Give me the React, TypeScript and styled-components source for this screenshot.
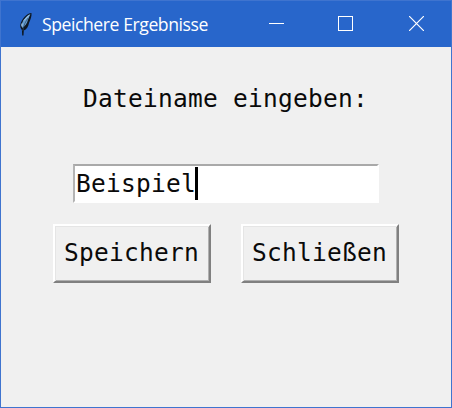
import React from 'react';
import styled, { createGlobalStyle } from 'styled-components';

const GlobalStyle = createGlobalStyle`
  *, *::before, *::after { box-sizing: border-box; }
  body { margin: 0; background: #f0f0f0; }
`;

const Window = styled.main`
  width: 452px;
  height: 408px;
  display: flex;
  flex-direction: column;
  border: 1px solid #3f74cf;
  background: #f0f0f0;
  overflow: hidden;
`;

const TitleBar = styled.header`
  flex: none;
  height: 46px;
  display: flex;
  align-items: center;
  padding-left: 17px;
  background: #2866cb;
  color: #fff;
`;

const Title = styled.h1`
  flex: 1;
  margin: 0 0 0 8px;
  font: 400 17.6px/24px 'Open Sans', sans-serif;
  letter-spacing: -0.43px;
  white-space: nowrap;
`;

const Controls = styled.div`
  display: flex;
  height: 100%;
`;

const ControlButton = styled.button<{ $width: number }>`
  width: ${({ $width }) => $width}px;
  height: 100%;
  padding: 0 0 1px;
  border: 0;
  background: none;
  color: #fff;
  display: grid;
  place-items: center;
`;

const Content = styled.form`
  flex: 1;
  display: flex;
  flex-direction: column;
  align-items: flex-start;
  font: 24.5px/32px 'DejaVu Sans Mono', monospace;
  letter-spacing: 0.25px;
  color: #0a0a0a;
`;

const Prompt = styled.label`
  margin: 36px 0 0 82px;
  white-space: pre;
`;

const Entry = styled.div`
  width: 306px;
  height: 39px;
  margin: 49px 0 0 72px;
  display: flex;
  align-items: center;
  padding-left: 1px;
  background: #fff;
  border: 2px solid;
  border-color: #a9a9a9 #fff #fff #b4b4b4;
  box-shadow: inset 0 1px 0 #fff;
`;

const Caret = styled.span`
  width: 3px;
  height: 33px;
  margin-left: -1px;
  background: #000;
`;

const Actions = styled.div`
  display: flex;
  gap: 30px;
  margin: 21px 0 0 52px;
`;

const ActionButton = styled.button`
  width: 158px;
  height: 59px;
  padding: 0 1px 1px 0;
  font: inherit;
  letter-spacing: inherit;
  color: inherit;
  background: #f0f0f0;
  border: 2px solid;
  border-color: #fff #808080 #808080 #fff;
  box-shadow: inset 1px 1px 0 #e5e5e5, inset -1px -1px 0 #b0b0b0;
`;

const Feather = () => (
  <svg width="16" height="24" viewBox="0 0 16 24" fill="none">
    <path d="M13.500 1C9 1 3.500 7 2.400 12.500c-.4 2 .2 4 1.500 5.500l.3 5.500h1.300l.3-5c2.700-1 4.700-4 5.200-7.500C12.400 8 13.900 4 13.500 1Z" fill="#0d1722" />
    <path d="M12.400 2C8.300 4 4.600 8 3.600 13l.7 3c2.400-1.500 5-4.500 5.600-8L12.400 2Z" fill="#659ccf" />
    <path d="M10.200 6C7.500 9.500 5.700 13 4.800 19" stroke="#294766" strokeWidth=".7" />
    <path d="M11.200 3.200 6 8.500M3.900 11.500v3" stroke="#b5d3ec" strokeWidth="1" />
  </svg>
);

export default function App() {
  return (
    <>
      <GlobalStyle />
      <Window>
        <TitleBar>
          <Feather />
          <Title>Speichere Ergebnisse</Title>
          <Controls>
            <ControlButton aria-label="Minimieren" $width={65}>
              <svg width="15" height="15" viewBox="0 0 15 15" shapeRendering="crispEdges">
                <path d="M0 7h15v1H0z" fill="currentColor" />
              </svg>
            </ControlButton>
            <ControlButton aria-label="Maximieren" $width={73}>
              <svg width="15" height="15" viewBox="0 0 15 15" fill="none" stroke="currentColor">
                <rect x=".5" y=".5" width="14" height="14" />
              </svg>
            </ControlButton>
            <ControlButton aria-label="Fenster schließen" $width={69}>
              <svg width="15" height="15" viewBox="0 0 15 15" stroke="currentColor" strokeWidth="1.200">
                <path d="m0 0 15 15M15 0 0 15" />
              </svg>
            </ControlButton>
          </Controls>
        </TitleBar>
        <Content>
          <Prompt>Dateiname eingeben:</Prompt>
          <Entry>
            <span>Beispiel</span>
            <Caret />
          </Entry>
          <Actions>
            <ActionButton type="button">Speichern</ActionButton>
            <ActionButton type="button">Schließen</ActionButton>
          </Actions>
        </Content>
      </Window>
    </>
  );
}
